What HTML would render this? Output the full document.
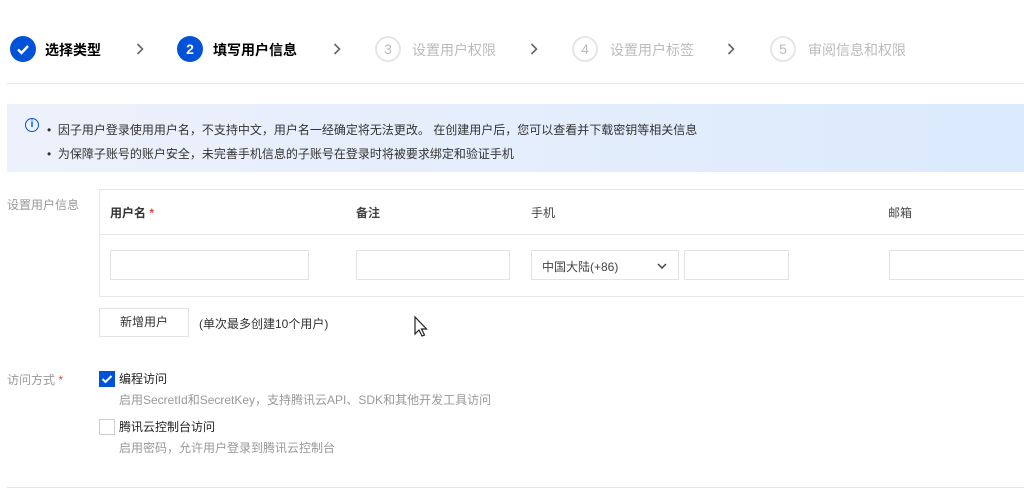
<!DOCTYPE html>
<html><head><meta charset="utf-8"><style>
*{margin:0;padding:0;box-sizing:border-box}
body{width:1024px;height:500px;background:#fff;position:relative;overflow:hidden;font-family:"Liberation Sans","Noto Sans CJK SC",sans-serif;color:#222;font-size:12px}
.a{position:absolute;white-space:nowrap}
.c{position:absolute;width:26px;height:26px;border-radius:50%;top:36px;text-align:center;line-height:26px;font-size:14px}
.cb{background:#0052d9;color:#fff;font-weight:bold}
.cg{border:2px solid #e6e6e6;color:#bbb;line-height:22px}
.st{top:40px;font-size:14px}
.sb{font-weight:bold;color:#000}
.sg{color:#bbb}
.ch{top:43px}
.inp{position:absolute;border:1px solid #e3e3e3;background:#fff;height:30px;top:250px}
.gray{color:#999}
</style></head><body>
<div class="c cb" style="left:10px"><svg width="26" height="26" viewBox="0 0 26 26"><path d="M8 13.5l3.5 3.5 6.5-7" stroke="#fff" stroke-width="2.4" fill="none"/></svg></div>
<div class="a st sb" style="left:45px">选择类型</div>
<svg class="a ch" style="left:136px" width="8" height="12"><path d="M1.5 1l5 5-5 5" stroke="#666" stroke-width="1.6" fill="none"/></svg>
<div class="c cb" style="left:177px">2</div>
<div class="a st sb" style="left:213px">填写用户信息</div>
<svg class="a ch" style="left:333px" width="8" height="12"><path d="M1.5 1l5 5-5 5" stroke="#666" stroke-width="1.6" fill="none"/></svg>
<div class="c cg" style="left:375px">3</div>
<div class="a st sg" style="left:412px">设置用户权限</div>
<svg class="a ch" style="left:530px" width="8" height="12"><path d="M1.5 1l5 5-5 5" stroke="#666" stroke-width="1.6" fill="none"/></svg>
<div class="c cg" style="left:572px">4</div>
<div class="a st sg" style="left:610px">设置用户标签</div>
<svg class="a ch" style="left:727px" width="8" height="12"><path d="M1.5 1l5 5-5 5" stroke="#666" stroke-width="1.6" fill="none"/></svg>
<div class="c cg" style="left:770px">5</div>
<div class="a st sg" style="left:808px">审阅信息和权限</div>
<div class="a" style="left:7px;right:0;top:83px;height:1px;background:#e5e5e5"></div>
<div class="a" style="left:7px;right:0;top:104px;height:68px;background:linear-gradient(90deg,#edf1fb,#dbeafd)"></div>
<div class="a" style="left:25px;top:118px;width:14px;height:14px;border:1px solid #0052d9;border-radius:50%;color:#0052d9;font-size:10px;line-height:12px;text-align:center;font-weight:bold">i</div>
<div class="a" style="left:47px;top:121px;color:#333">•&nbsp; 因子用户登录使用用户名，不支持中文，用户名一经确定将无法更改。 在创建用户后，您可以查看并下载密钥等相关信息</div>
<div class="a" style="left:47px;top:145px;color:#333">•&nbsp; 为保障子账号的账户安全，未完善手机信息的子账号在登录时将被要求绑定和验证手机</div>
<div class="a gray" style="left:7px;top:196px">设置用户信息</div>
<div class="a" style="left:99px;right:-2px;top:189px;height:108px;border:1px solid #e8e8e8"></div>
<div class="a" style="left:99px;right:0;top:234px;height:1px;background:#e8e8e8"></div>
<div class="a" style="left:110px;top:204px;font-weight:bold;color:#333">用户名 <span style="color:#e54545">*</span></div>
<div class="a" style="left:356px;top:204px;font-weight:bold;color:#444">备注</div>
<div class="a" style="left:531px;top:204px;color:#444">手机</div>
<div class="a" style="left:888px;top:204px;color:#444">邮箱</div>
<div class="inp" style="left:110px;width:199px"></div>
<div class="inp" style="left:356px;width:154px"></div>
<div class="inp" style="left:531px;width:148px"><span class="a" style="left:10px;top:7px;color:#444">中国大陆(+86)</span><svg class="a" style="left:125px;top:11px" width="10" height="8"><path d="M1 2l4 4 4-4" stroke="#444" stroke-width="1.5" fill="none"/></svg></div>
<div class="inp" style="left:684px;width:105px"></div>
<div class="inp" style="left:889px;width:140px"></div>
<div class="a" style="left:99px;top:308px;width:90px;height:29px;border:1px solid #e3e3e3;text-align:center;line-height:27px;color:#333">新增用户</div>
<div class="a" style="left:199px;top:315px;color:#333">(单次最多创建10个用户)</div>
<svg class="a" style="left:413px;top:315px" width="18" height="24"><path d="M2 2v17l4-4 3 6 2.5-1-3-6h5z" fill="#fff" stroke="#222" stroke-width="1.2"/></svg>
<div class="a gray" style="left:7px;top:371px">访问方式 <span style="color:#e54545">*</span></div>
<div class="a" style="left:99px;top:371px;width:16px;height:16px;background:#0052d9"><svg width="16" height="16"><path d="M3.5 8l3 3 6-6" stroke="#fff" stroke-width="2" fill="none"/></svg></div>
<div class="a" style="left:119px;top:370px;color:#222">编程访问</div>
<div class="a gray" style="left:119px;top:391px">启用SecretId和SecretKey，支持腾讯云API、SDK和其他开发工具访问</div>
<div class="a" style="left:99px;top:419px;width:16px;height:16px;border:1px solid #ccc"></div>
<div class="a" style="left:119px;top:418px;color:#222">腾讯云控制台访问</div>
<div class="a gray" style="left:119px;top:439px">启用密码，允许用户登录到腾讯云控制台</div>
<div class="a" style="left:7px;right:0;top:487px;height:1px;background:#e5e5e5"></div>
</body></html>
